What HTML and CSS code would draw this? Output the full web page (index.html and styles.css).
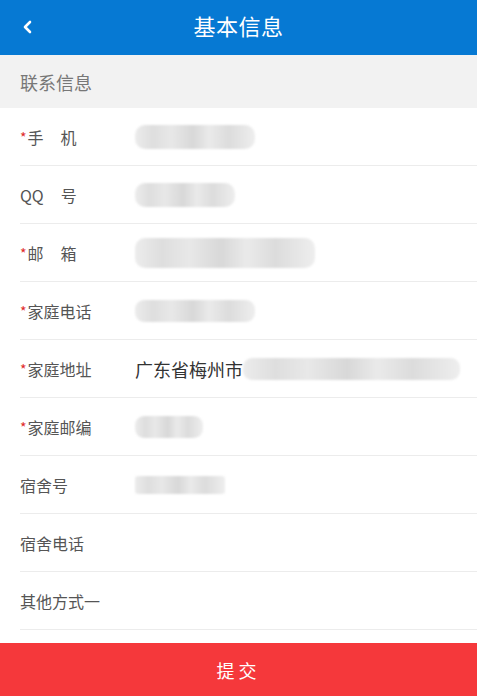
FILE: index.html
```html
<!DOCTYPE html>
<html lang="zh-CN">

<head>
    <meta charset="UTF-8">
    <meta name="viewport" content="width=device-width, initial-scale=1.0">
    <title>基本信息</title>
    <link rel="stylesheet" href="styles.css">
</head>

<body>
    <div class="page">
        <div class="topbar">
            <span class="back">
                <svg width="12" height="16" viewBox="0 0 12 16">
                    <polyline points="8,3 3,8 8,13" fill="none" stroke="#fff" stroke-width="2.6" stroke-linecap="round" stroke-linejoin="round"/>
                </svg>
            </span>
            <div class="title">基本信息</div>
        </div>

        <div class="section-title">联系信息</div>

        <div class="form">
            <div class="row">
                <div class="label"><i>*</i>手<span class="sp"></span>机</div>
                <div class="value"><span class="blur" style="width:120px"></span></div>
            </div>
            <div class="row">
                <div class="label">QQ<span class="sp"></span>号</div>
                <div class="value"><span class="blur" style="width:100px"></span></div>
            </div>
            <div class="row">
                <div class="label"><i>*</i>邮<span class="sp"></span>箱</div>
                <div class="value"><span class="blur tall" style="width:180px"></span></div>
            </div>
            <div class="row">
                <div class="label"><i>*</i>家庭电话</div>
                <div class="value"><span class="blur thin" style="width:120px"></span></div>
            </div>
            <div class="row">
                <div class="label"><i>*</i>家庭地址</div>
                <div class="value">广东省梅州市<span class="blur thin" style="width:217px"></span></div>
            </div>
            <div class="row">
                <div class="label"><i>*</i>家庭邮编</div>
                <div class="value"><span class="blur thin" style="width:68px"></span></div>
            </div>
            <div class="row">
                <div class="label">宿舍号</div>
                <div class="value"><span class="blur small" style="width:90px"></span></div>
            </div>
            <div class="row">
                <div class="label">宿舍电话</div>
                <div class="value"></div>
            </div>
            <div class="row">
                <div class="label">其他方式一</div>
                <div class="value"></div>
            </div>
        </div>

        <div class="submit">提交</div>
    </div>
</body>

</html>
```

FILE: styles.css
```css
* {
    box-sizing: border-box;
}
body {
    margin: 0;
    font-family: "Noto Sans CJK SC", "Noto Sans", sans-serif;
    background: #fff;
}
.page {
    width: 477px;
    height: 696px;
    display: flex;
    flex-direction: column;
    overflow: hidden;
}
.topbar {
    height: 55px;
    background-color: #0679d3;
    display: flex;
    align-items: center;
    justify-content: center;
    position: relative;
}
.back {
    position: absolute;
    left: 22px;
    top: 19px;
    display: flex;
}
.title {
    color: #fff;
    font-size: 22px;
    letter-spacing: 0.5px;
    margin-top: -5px;
}
.section-title {
    height: 53px;
    background-color: #f2f2f2;
    color: #777;
    font-size: 18px;
    padding-left: 20px;
    display: flex;
    align-items: center;
}
.form {
    flex: 1;
}
.row {
    height: 58px;
    margin-left: 20px;
    border-bottom: 1px solid #ececec;
    display: flex;
    align-items: center;
}
.label {
    width: 115px;
    font-size: 16px;
    color: #555;
    display: flex;
    align-items: center;
}
.label i {
    font-style: normal;
    color: #e02a2a;
    font-size: 14px;
    margin-right: 1px;
}
.label .sp {
    display: inline-block;
    width: 17px;
}
.value {
    font-size: 18px;
    color: #333;
    display: flex;
    align-items: center;
}
.blur {
    display: inline-block;
    height: 24px;
    border-radius: 10px;
    background: linear-gradient(90deg, #ececec 0%, #dedede 15%, #e8e8e8 30%, #d8d8d8 48%, #eaeaea 62%, #dcdcdc 78%, #eeeeee 100%);
    filter: blur(1px);
}
.blur.tall {
    height: 30px;
}
.blur.thin {
    height: 22px;
    border-radius: 9px;
}
.blur.small {
    height: 18px;
    border-radius: 3px;
}
.submit {
    height: 53px;
    margin-top: auto;
    background-color: #f5383b;
    color: #fff;
    font-size: 18px;
    letter-spacing: 4px;
    display: flex;
    align-items: center;
    justify-content: center;
}
```
